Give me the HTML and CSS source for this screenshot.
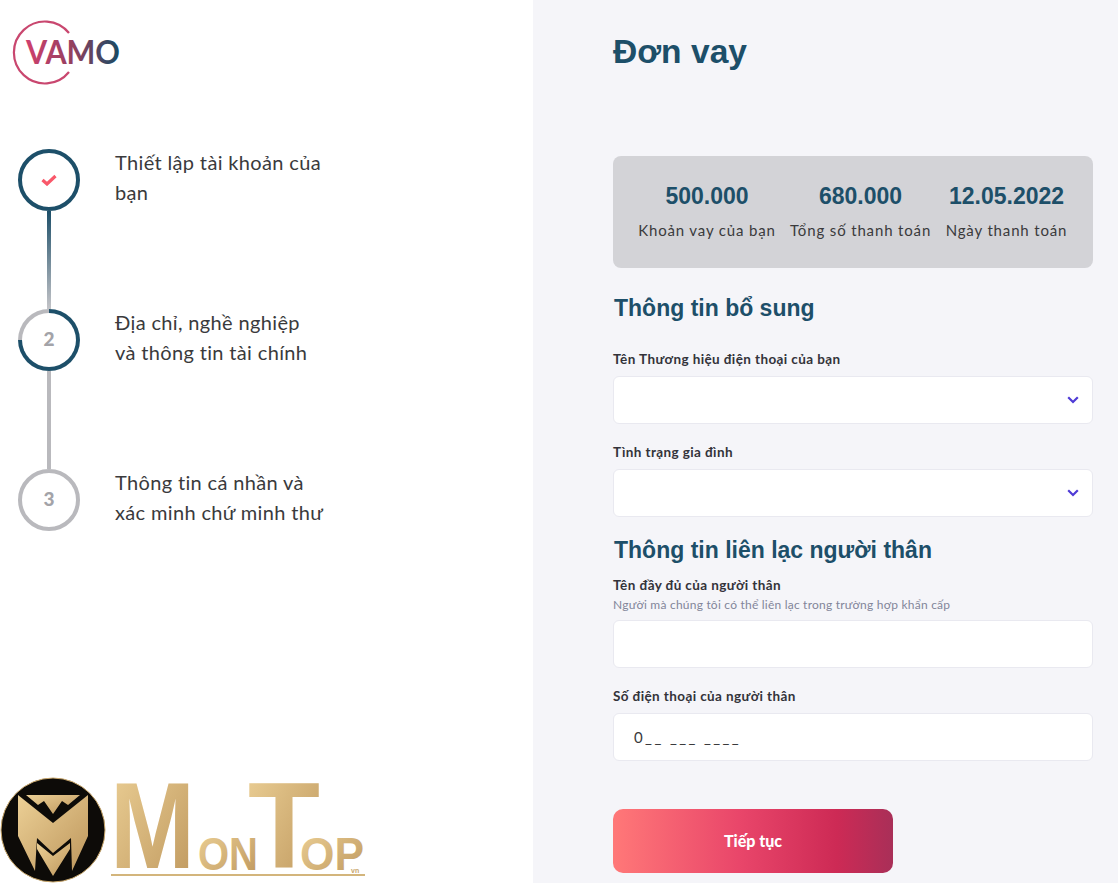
FILE: index.html
```html
<!DOCTYPE html>
<html lang="vi">
<head>
    <meta charset="UTF-8">
    <meta name="viewport" content="width=device-width, initial-scale=1.0">
    <title>Đơn vay</title>
    <link rel="stylesheet" href="styles.css">
</head>
<body>
    <div class="page">
        <aside class="side">
            <svg class="logo" width="130" height="70" viewBox="0 0 130 70">
                <defs>
                    <linearGradient id="vamo-grad" x1="0" y1="0" x2="1" y2="0">
                        <stop offset="0" stop-color="#d0406e"/>
                        <stop offset="0.5" stop-color="#93405f"/>
                        <stop offset="1" stop-color="#174a63"/>
                    </linearGradient>
                </defs>
                <path d="M 69 15 A 31 31 0 1 0 69 54" fill="none" stroke="#c9476f" stroke-width="2.2"/>
                <text x="26" y="46" font-size="32" textLength="94" lengthAdjust="spacingAndGlyphs" fill="url(#vamo-grad)" class="logo-text">VAMO</text>
            </svg>

            <div class="steps">
                <div class="step">
                    <div class="step-mark">
                        <div class="ring ring-done">
                            <svg width="16" height="12" viewBox="0 0 16 12"><path d="M1.5 6 L6 10 L14.5 2" fill="none" stroke="#f9586a" stroke-width="3.2"/></svg>
                        </div>
                        <div class="line line-fade"></div>
                    </div>
                    <p class="step-text">Thiết lập tài khoản của<br>bạn</p>
                </div>
                <div class="step">
                    <div class="step-mark">
                        <div class="ring ring-half"><span>2</span></div>
                        <div class="line"></div>
                    </div>
                    <p class="step-text">Địa chỉ, nghề nghiệp<br>và thông tin tài chính</p>
                </div>
                <div class="step">
                    <div class="step-mark">
                        <div class="ring"><span>3</span></div>
                    </div>
                    <p class="step-text">Thông tin cá nhần và<br>xác minh chứ minh thư</p>
                </div>
            </div>

            <svg class="watermark" width="366" height="107" viewBox="0 0 366 107">
                <defs>
                    <linearGradient id="gold" x1="0" y1="0" x2="1" y2="1">
                        <stop offset="0" stop-color="#ecd096"/>
                        <stop offset="1" stop-color="#bd965c"/>
                    </linearGradient>
                </defs>
                <circle cx="53" cy="54" r="52" fill="#0d0b08" stroke="#c9a76b" stroke-width="1"/>
                <polygon points="18,19 53,47 88,19 88,60 72,95 71,62 53,77 37,62 35,95 18,60" fill="url(#gold)"/>
                <polygon points="26,19 80,19 68,29 62,25 53,38 44,25 38,29" fill="url(#gold)"/>
                <polygon points="37,67 53,80 70,67 70,73 53,100 37,73" fill="url(#gold)"/>
                <text x="110" y="92" font-size="122" textLength="85" lengthAdjust="spacingAndGlyphs" fill="url(#gold)" class="mark-text">M</text>
                <text x="198" y="94" font-size="46" textLength="60" lengthAdjust="spacingAndGlyphs" fill="url(#gold)" class="mark-text">ON</text>
                <text x="248" y="92" font-size="122" textLength="72" lengthAdjust="spacingAndGlyphs" fill="url(#gold)" class="mark-text">T</text>
                <text x="300" y="94" font-size="46" textLength="64" lengthAdjust="spacingAndGlyphs" fill="url(#gold)" class="mark-text">OP</text>
                <text x="351" y="97" font-size="7" fill="#c9a76b" class="mark-text">vn</text>
                <rect x="111" y="98" width="254" height="2" fill="#d3b57c"/>
            </svg>
        </aside>

        <main class="content">
            <h1 class="title">Đơn vay</h1>

            <section class="summary">
                <div class="summary-col summary-a">
                    <strong>500.000</strong>
                    <span>Khoản vay của bạn</span>
                </div>
                <div class="summary-col summary-b">
                    <strong>680.000</strong>
                    <span>Tổng số thanh toán</span>
                </div>
                <div class="summary-col summary-c">
                    <strong>12.05.2022</strong>
                    <span>Ngày thanh toán</span>
                </div>
            </section>

            <h2 class="section-title">Thông tin bổ sung</h2>

            <div class="field">
                <label>Tên Thương hiệu điện thoại của bạn</label>
                <div class="box select-box">
                    <svg width="12" height="8" viewBox="0 0 12 8"><path d="M1.2 1.2 L6 6 L10.8 1.2" fill="none" stroke="#4f3bd6" stroke-width="2.2"/></svg>
                </div>
            </div>

            <div class="field">
                <label>Tình trạng gia đình</label>
                <div class="box select-box">
                    <svg width="12" height="8" viewBox="0 0 12 8"><path d="M1.2 1.2 L6 6 L10.8 1.2" fill="none" stroke="#4f3bd6" stroke-width="2.2"/></svg>
                </div>
            </div>

            <h2 class="section-title section-title-2">Thông tin liên lạc người thân</h2>

            <div class="field">
                <label>Tên đầy đủ của người thân</label>
                <small>Người mà chúng tôi có thể liên lạc trong trường hợp khẩn cấp</small>
                <div class="box"></div>
            </div>

            <div class="field">
                <label>Số điện thoại của người thân</label>
                <div class="box phone-box">0__ ___ ____</div>
            </div>

            <button class="next-btn">Tiếp tục</button>
        </main>
    </div>
</body>
</html>
```

FILE: styles.css
```css
* {
    margin: 0;
    padding: 0;
    box-sizing: border-box;
}

body {
    font-family: "Lato", "Noto Sans", sans-serif;
    color: #3a3a3c;
    background-color: #fff;
}

.page {
    display: flex;
    height: 883px;
    overflow: hidden;
}

/* left column */
.side {
    position: relative;
    flex: 0 0 533px;
    padding: 18px 0 0 18px;
    background-color: #fff;
}

.logo {
    display: block;
    margin-left: -18px;
}

.logo-text {
    font-family: "Lato", sans-serif;
    font-weight: bold;
}

.steps {
    margin-top: 61px;
}

.step {
    display: flex;
    gap: 35px;
    height: 160px;
}

.step-mark {
    display: flex;
    flex-direction: column;
    align-items: center;
    width: 62px;
}

.ring {
    display: flex;
    align-items: center;
    justify-content: center;
    flex-shrink: 0;
    width: 62px;
    height: 62px;
    padding-bottom: 3px;
    border: 4px solid #b9b9bd;
    border-radius: 50%;
    font-size: 19px;
    font-weight: 900;
    color: #a3a3a8;
}

.ring-done {
    padding-bottom: 0;
    border-color: #1d4f69;
}

.ring-half {
    position: relative;
    border: none;
    background: conic-gradient(#1d4f69 0 75%, #b9b9bd 75% 100%);
}

.ring-half::before {
    content: "";
    position: absolute;
    inset: 4px;
    border-radius: 50%;
    background-color: #fff;
}

.ring-half span {
    position: relative;
}

.line {
    flex: 1;
    width: 4px;
    background-color: #b9b9bd;
}

.line-fade {
    background: linear-gradient(#1d4f69, #c4c4c8);
}

.step-text {
    margin-top: -2px;
    font-size: 20px;
    line-height: 30px;
    letter-spacing: 0.35px;
}

/* watermark logo over the corner */
.watermark {
    position: absolute;
    left: 0;
    bottom: 0;
}

.mark-text {
    font-family: "Liberation Sans", sans-serif;
    font-weight: bold;
}

/* right column */
.content {
    flex: 1;
    min-width: 0;
    padding: 0 25px 0 80px;
    background-color: #f5f5f9;
}

.title {
    height: 156px;
    padding-top: 30px;
    font-family: "Liberation Sans", sans-serif;
    font-size: 33.6px;
    line-height: 44px;
    color: #1d4f69;
}

.summary {
    display: flex;
    height: 112px;
    padding-top: 26px;
    background-color: #d3d3d7;
    border-radius: 8px;
}

.summary-col {
    display: flex;
    flex-direction: column;
    align-items: center;
    gap: 10px;
}

.summary-a {
    width: 188px;
}

.summary-b {
    width: 119px;
}

.summary-c {
    width: 173px;
}

.summary-col strong {
    font-family: "Liberation Sans", sans-serif;
    font-size: 23px;
    line-height: 28px;
    color: #1d4f69;
}

.summary-col span {
    font-size: 15px;
    line-height: 20px;
    letter-spacing: 0.85px;
    white-space: nowrap;
}

.section-title {
    margin: 24px 0 26px 1px;
    font-family: "Liberation Sans", sans-serif;
    font-size: 23px;
    line-height: 32px;
    color: #1d4f69;
}

.section-title-2 {
    margin: -2px 0 10px 1px;
}

.field {
    margin-bottom: 19px;
}

.field label {
    display: block;
    height: 26px;
    font-size: 13.5px;
    line-height: 18px;
    font-weight: bold;
    letter-spacing: 0.4px;
    color: #33333a;
}

.field small {
    display: block;
    height: 23px;
    margin-top: -5px;
    font-size: 12px;
    line-height: 16px;
    letter-spacing: 0.22px;
    color: #82859a;
}

.box {
    display: flex;
    align-items: center;
    height: 48px;
    padding: 0 13px 0 20px;
    background-color: #fff;
    border: 1px solid #e9e9f0;
    border-radius: 6px;
}

.select-box {
    justify-content: flex-end;
}

.phone-box {
    font-size: 15px;
    letter-spacing: 2.4px;
}

.next-btn {
    display: block;
    width: 280px;
    height: 64px;
    margin-top: 48px;
    padding-bottom: 2px;
    border: none;
    border-radius: 10px;
    background: linear-gradient(90deg, #ff7878 0%, #e9466a 45%, #cd2a55 80%, #a92f58 100%);
    color: #fff;
    font-family: "Lato", sans-serif;
    font-size: 16px;
    font-weight: 900;
    cursor: pointer;
}
```
